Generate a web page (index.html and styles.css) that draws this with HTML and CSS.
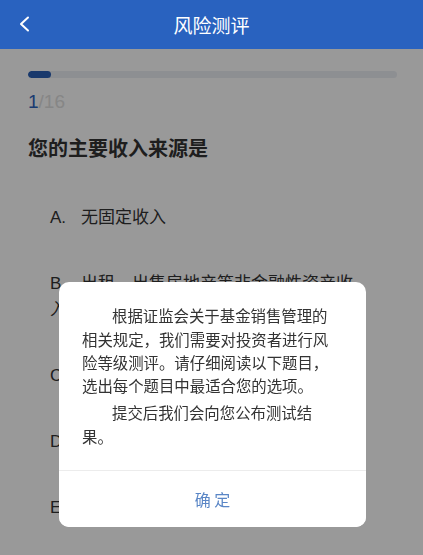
FILE: index.html
```html
<!DOCTYPE html>
<html lang="zh-CN">
<head>
<meta charset="utf-8">
<title>风险测评</title>
<link rel="stylesheet" href="styles.css">
</head>
<body>
<header class="topbar">
  <button class="back" aria-label="返回">
    <svg width="12" height="16" viewBox="0 0 12 16"><polyline points="10,1.5 3,8 10,14.5" fill="none" stroke="#fff" stroke-width="2" stroke-linecap="round" stroke-linejoin="round"/></svg>
  </button>
  <h1 class="title">风险测评</h1>
</header>
<main class="page">
  <div class="progress"><div class="progress-fill" style="width:6.25%"></div></div>
  <div class="count"><span class="current">1</span><span class="total">/16</span></div>
  <h2 class="question">您的主要收入来源是</h2>
  <ul class="options">
    <li class="option"><span class="key">A.</span>无固定收入</li>
    <li class="option"><span class="key">B.</span>出租、出售房地产等非金融性资产收入</li>
    <li class="option"><span class="key">C.</span>工资、劳务报酬</li>
    <li class="option"><span class="key">D.</span>生产经营所得</li>
    <li class="option"><span class="key">E.</span>利息、股息等金融性资产收入</li>
  </ul>
</main>
<div class="mask">
  <div class="dialog">
    <div class="dialog-body">
      <p class="para">根据证监会关于基金销售管理的相关规定，我们需要对投资者进行风险等级测评。请仔细阅读以下题目，选出每个题目中最适合您的选项。</p>
      <p class="para">提交后我们会向您公布测试结果。</p>
    </div>
    <button class="dialog-btn">确 定</button>
  </div>
</div>
</body>
</html>
```
FILE: styles.css
```css
* { box-sizing: border-box; }
html, body { margin: 0; padding: 0; }
body {
  width: 423px;
  height: 555px;
  overflow: hidden;
  background: #fff;
  font-family: "Liberation Sans", "Noto Sans CJK SC", sans-serif;
  color: #333;
}
.topbar {
  position: relative;
  z-index: 3;
  height: 49px;
  background: #2962bf;
  display: flex;
  align-items: center;
  justify-content: center;
}
.back {
  position: absolute;
  left: 18px;
  top: 16px;
  padding: 0;
  border: 0;
  background: none;
  width: 12px;
  height: 16px;
  display: block;
}
.back svg { display: block; }
.title {
  margin: 0;
  font-size: 19px;
  font-weight: 400;
  color: #fff;
  font-family: "Noto Sans CJK SC", sans-serif;
  line-height: 1;
}
.page {
  padding: 22px 26px 0 28px;
}
.progress {
  height: 7px;
  border-radius: 4px;
  background: #eceff4;
  overflow: hidden;
}
.progress-fill {
  height: 100%;
  border-radius: 4px;
  background: #2a5fb5;
}
.count {
  margin-top: 12px;
  font-size: 19px;
  line-height: 24px;
}
.current { color: #2d63bd; }
.total { color: #e0e0e0; }
.question {
  margin: 20px 0 0;
  font-size: 20px;
  line-height: 28px;
  font-weight: 600;
  color: #333;
  font-family: "Noto Sans CJK SC", sans-serif;
}
.options {
  list-style: none;
  margin: 43px 0 0;
  padding: 0 34px 0 22px;
  display: flex;
  flex-direction: column;
  gap: 40px;
}
.option {
  font-size: 17px;
  line-height: 26px;
  color: #333;
}
.key {
  display: inline-block;
  width: 31px;
}
.mask {
  position: fixed;
  inset: 0;
  z-index: 2;
  background: rgba(0, 0, 0, 0.4);
  display: flex;
  align-items: flex-end;
  justify-content: center;
  padding-bottom: 28px;
  padding-left: 2px;
}
.dialog {
  width: 307px;
  background: #fff;
  border-radius: 10px;
  overflow: hidden;
}
.dialog-body {
  padding: 22px 28px 22px 23px;
  border-bottom: 1px solid #ececec;
}
.para {
  margin: 0;
  font-family: "Noto Sans CJK SC", sans-serif;
  font-size: 15.4px;
  line-height: 23.3px;
  text-indent: 30px;
  color: #333;
}
.para + .para { margin-top: 4px; }
.dialog-btn {
  display: block;
  width: 100%;
  height: 56px;
  border: 0;
  background: #fff;
  font-family: "Noto Sans CJK SC", sans-serif;
  font-size: 16px;
  color: #5a86c6;
  padding: 0;
}
```
